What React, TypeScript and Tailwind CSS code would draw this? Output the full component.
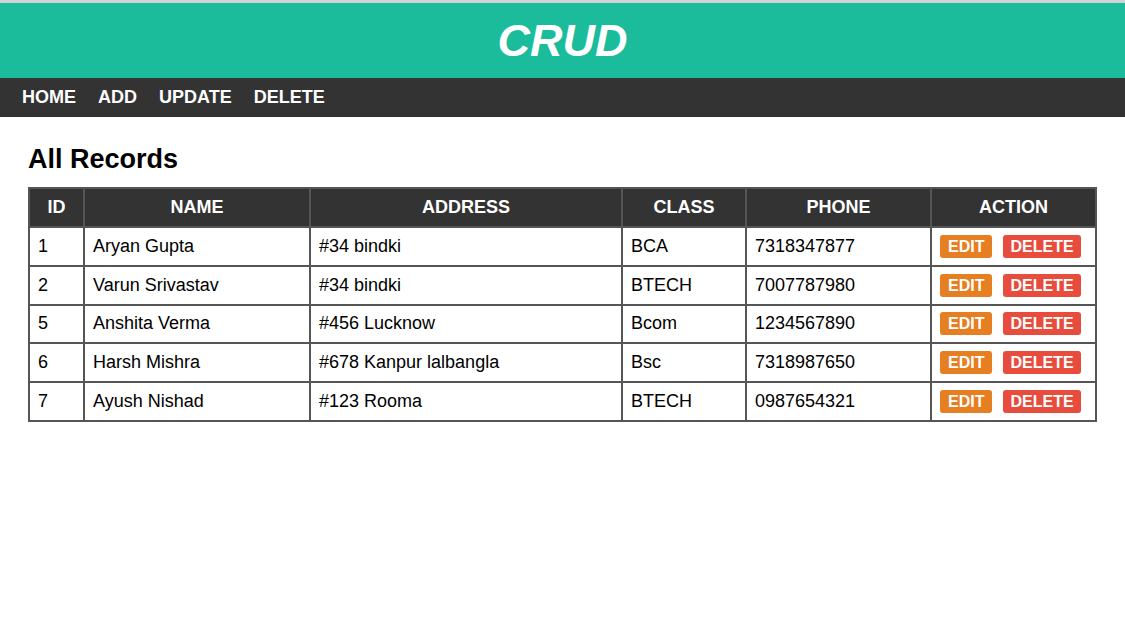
import React from "react";

const rows = [
  ["1", "Aryan Gupta", "#34 bindki", "BCA", "7318347877"],
  ["2", "Varun Srivastav", "#34 bindki", "BTECH", "7007787980"],
  ["5", "Anshita Verma", "#456 Lucknow", "Bcom", "1234567890"],
  ["6", "Harsh Mishra", "#678 Kanpur lalbangla", "Bsc", "7318987650"],
  ["7", "Ayush Nishad", "#123 Rooma", "BTECH", "0987654321"],
];

const widths = [55, 226, 312, 124, 185, 165];
const heads = ["ID", "NAME", "ADDRESS", "CLASS", "PHONE", "ACTION"];

export default function App() {
  return (
    <div className="min-h-[619px] bg-white" style={{ fontFamily: '"Liberation Sans", Arial, sans-serif' }}>
      <div className="h-[3px] bg-[#d3d3d3]" />
      <header className="h-[75px] bg-[#1abc9c] flex items-center justify-center">
        <h1 className="text-white text-[45px] font-bold italic leading-none">CRUD</h1>
      </header>
      <nav className="h-[39px] bg-[#333333] flex items-center pl-[11px]">
        {["HOME", "ADD", "UPDATE", "DELETE"].map((n) => (
          <a key={n} className="text-white font-bold text-[18px] px-[11px]">{n}</a>
        ))}
      </nav>
      <main className="px-[28px] pt-[29px]">
        <h2 className="text-[27px] font-bold text-black leading-none mb-[14px]">All Records</h2>
        <table className="border-collapse table-fixed w-[1067px] text-[18px] text-black">
          <colgroup>
            {widths.map((w, i) => (
              <col key={i} style={{ width: w }} />
            ))}
          </colgroup>
          <thead>
            <tr className="bg-[#333333] h-[39px]">
              {heads.map((h) => (
                <th key={h} className="border-2 border-[#555555] text-white font-bold text-center p-0">{h}</th>
              ))}
            </tr>
          </thead>
          <tbody>
            {rows.map((r) => (
              <tr key={r[0]} className="h-[38.8px]">
                {r.map((c, i) => (
                  <td key={i} className="border-2 border-[#555555] pl-[8px] py-0">{c}</td>
                ))}
                <td className="border-2 border-[#555555] pl-[8px] py-0">
                  <div className="flex gap-[11px]">
                    <span className="bg-[#e67e22] text-white font-bold text-[16px] leading-[23px] px-[8px] rounded-[3px]">EDIT</span>
                    <span className="bg-[#e74c3c] text-white font-bold text-[16px] leading-[23px] px-[7px] rounded-[3px]">DELETE</span>
                  </div>
                </td>
              </tr>
            ))}
          </tbody>
        </table>
      </main>
    </div>
  );
}
